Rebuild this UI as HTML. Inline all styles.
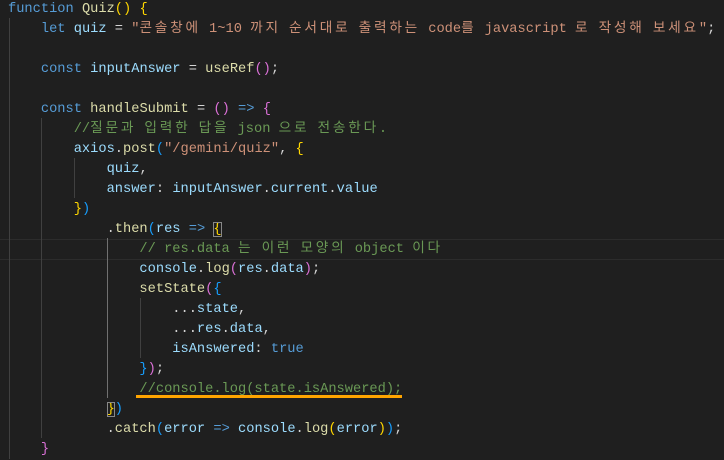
<!DOCTYPE html>
<html><head><meta charset="utf-8"><style>
html,body{margin:0;padding:0;background:#1f1f1f;width:724px;height:459px;overflow:hidden}
#c{position:absolute;left:8px;top:0px;font-family:"Liberation Mono","Noto Sans CJK KR",monospace;font-size:13.7px;color:#d4d4d4}
.l{height:20px;line-height:20px;white-space:pre;overflow:hidden}
.k{letter-spacing:2.75px}
.kw{color:#569cd6}.v{color:#9cdcfe}.f{color:#dcdcaa}.s{color:#ce9178}.cm{color:#6a9955}
.g{color:#ffd700}.p{color:#da70d6}.b{color:#179fff}
.bx{outline:1px solid #888;outline-offset:-1px}
.gd{position:absolute;width:1px;background:#404040}
#hl{position:absolute;left:0;top:239px;width:724px;height:19px;border-top:1px solid #2c2c2c;border-bottom:1px solid #2c2c2c}
#ul{position:absolute;left:136px;top:395px;width:266px;height:3px;background:#ffa500}
</style></head><body>
<div id="hl"></div>
<div class="gd" style="left:9px;top:18px;height:441px"></div>
<div class="gd" style="left:41px;top:118px;height:320px"></div>
<div class="gd" style="left:74px;top:158px;height:40px"></div>
<div class="gd" style="left:107px;top:238px;height:160px;background:#707070"></div>
<div class="gd" style="left:140px;top:298px;height:60px"></div>
<div id="c"><div class="l"><span class="kw">function</span> <span class="f">Quiz</span><span class="g">()</span> <span class="g">{</span></div><div class="l">    <span class="kw">let</span> <span class="v">quiz</span> = <span class="s">"<span class="k">콘솔창에</span> 1~10 <span class="k">까지</span> <span class="k">순서대로</span> <span class="k">출력하는</span> code<span class="k">를</span> javascript <span class="k">로</span> <span class="k">작성해</span> <span class="k">보세요</span>"</span>;</div><div class="l"> </div><div class="l">    <span class="kw">const</span> <span class="v">inputAnswer</span> = <span class="f">useRef</span><span class="p">()</span>;</div><div class="l"> </div><div class="l">    <span class="kw">const</span> <span class="f">handleSubmit</span> = <span class="p">()</span> <span class="kw">=&gt;</span> <span class="p">{</span></div><div class="l">        <span class="cm">//<span class="k">질문과</span> <span class="k">입력한</span> <span class="k">답을</span> json <span class="k">으로</span> <span class="k">전송한다</span>.</span></div><div class="l">        <span class="v">axios</span>.<span class="f">post</span><span class="b">(</span><span class="s">"/gemini/quiz"</span>, <span class="g">{</span></div><div class="l">            <span class="v">quiz</span>,</div><div class="l">            <span class="v">answer</span>: <span class="v">inputAnswer</span>.<span class="v">current</span>.<span class="v">value</span></div><div class="l">        <span class="g">}</span><span class="b">)</span></div><div class="l">            .<span class="f">then</span><span class="b">(</span><span class="v">res</span> <span class="kw">=&gt;</span> <span class="g bx">{</span></div><div class="l">                <span class="cm">// res.data <span class="k">는</span> <span class="k">이런</span> <span class="k">모양의</span> object <span class="k">이다</span></span></div><div class="l">                <span class="v">console</span>.<span class="f">log</span><span class="p">(</span><span class="v">res</span>.<span class="v">data</span><span class="p">)</span>;</div><div class="l">                <span class="f">setState</span><span class="p">(</span><span class="b">{</span></div><div class="l">                    ...<span class="v">state</span>,</div><div class="l">                    ...<span class="v">res</span>.<span class="v">data</span>,</div><div class="l">                    <span class="v">isAnswered</span>: <span class="kw">true</span></div><div class="l">                <span class="b">}</span><span class="p">)</span>;</div><div class="l">                <span class="cm">//console.log(state.isAnswered);</span></div><div class="l">            <span class="g bx">}</span><span class="b">)</span></div><div class="l">            .<span class="f">catch</span><span class="b">(</span><span class="v">error</span> <span class="kw">=&gt;</span> <span class="v">console</span>.<span class="f">log</span><span class="g">(</span><span class="v">error</span><span class="g">)</span><span class="b">)</span>;</div><div class="l">    <span class="p">}</span></div></div>
<div id="ul"></div>
</body></html>
